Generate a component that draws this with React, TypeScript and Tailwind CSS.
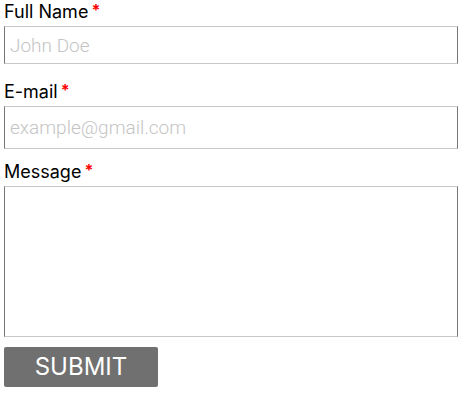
const labelCls = "flex items-start text-[18px] leading-[22px] text-black";
const inputCls =
  "block w-[454px] border border-x-[#767676] border-y-[#c8c8c8] bg-white px-[5px] font-['Roboto',sans-serif] text-[19px] font-light text-[#333] placeholder:text-[#c4c4c4] outline-none";

function Label({ text }: { text: string }) {
  return (
    <label className={labelCls}>
      {text}
      <span className="ml-[3px] text-[16px] leading-[18px] font-bold text-[#ff0000]">*</span>
    </label>
  );
}

export default function App() {
  return (
    <div
      className="w-[471px] h-[400px] bg-white px-[4px] pt-[1px]"
      style={{ fontFamily: "Inter, 'Noto Sans', sans-serif" }}
    >
      <form className="flex flex-col" onSubmit={(e) => e.preventDefault()}>
        <Label text="Full Name" />
        <input className={`${inputCls} mt-[3px] h-[38px]`} placeholder="John Doe" />

        <div className="mt-[17px]">
          <Label text="E-mail" />
        </div>
        <input
          className={`${inputCls} mt-[3px] h-[43px]`}
          placeholder="example@gmail.com"
        />

        <div className="mt-[12px]">
          <Label text="Message" />
        </div>
        <textarea className={`${inputCls} mt-[3px] h-[151px] resize-none`} />

        <button
          type="submit"
          className="mt-[10px] h-[40px] w-[154px] rounded-[2px] bg-[#707070] text-[24px] text-white"
        >
          SUBMIT
        </button>
      </form>
    </div>
  );
}
